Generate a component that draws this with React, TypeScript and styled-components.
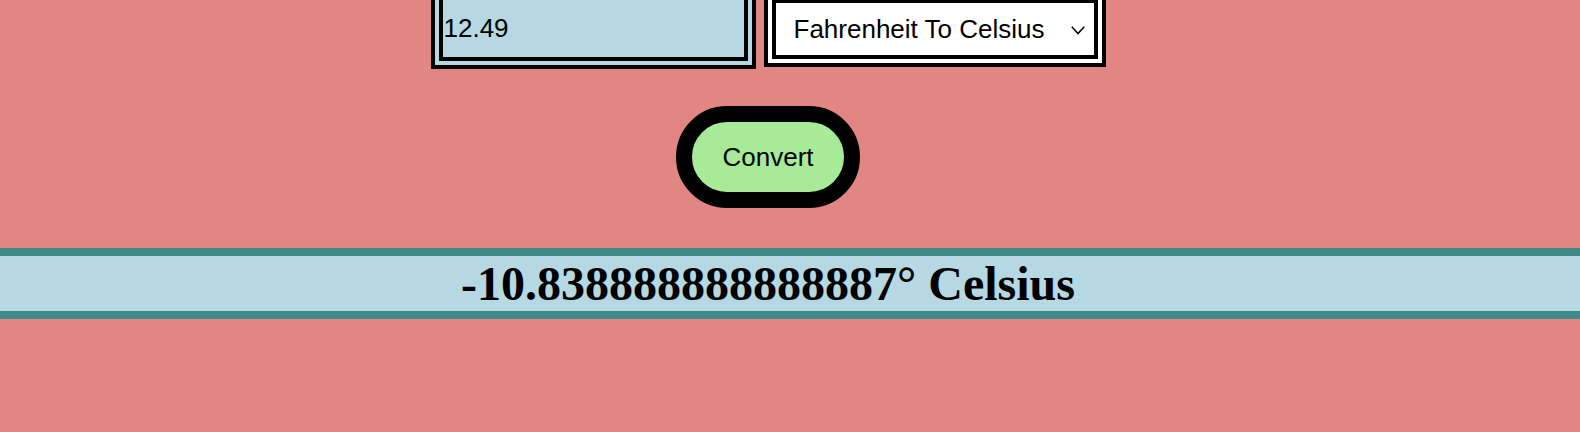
import React from 'react';
import styled, { createGlobalStyle } from 'styled-components';

const GlobalStyle = createGlobalStyle`
  html, body {
    margin: 0;
    padding: 0;
    background: #e18683;
    overflow: hidden;
  }
  body {
    font-family: "Liberation Serif", "Times New Roman", serif;
  }
`;

const Page = styled.div`
  display: flex;
  flex-direction: column;
  align-items: stretch;
  min-height: 432px;
`;

const Centered = styled.div`
  display: flex;
  flex-direction: column;
  align-items: center;
  padding-right: 44px;
`;

const FormRow = styled.div`
  display: flex;
  align-items: center;
  gap: 8px;
  margin-top: -12px;
`;

const TempInput = styled.input`
  box-sizing: content-box;
  width: 300px;
  height: 57px;
  padding: 0 0 0 1px;
  border: 12px double #000;
  background: #b6d8e2;
  color: #000;
  font-family: "Liberation Sans", Arial, sans-serif;
  font-size: 26px;
  outline: none;
`;

const SelectWrap = styled.div`
  position: relative;
  display: flex;
`;

const UnitSelect = styled.select`
  appearance: none;
  -webkit-appearance: none;
  box-sizing: content-box;
  width: 300px;
  height: 52px;
  padding: 0 0 0 18px;
  margin: 0;
  border: 12px double #000;
  border-radius: 0;
  background: #fff;
  color: #000;
  font-family: "Liberation Sans", Arial, sans-serif;
  font-size: 26px;
  outline: none;
`;

const Chevron = styled.svg`
  position: absolute;
  right: 21px;
  top: 35px;
  width: 14px;
  height: 9px;
  pointer-events: none;
`;

const ConvertButton = styled.button`
  margin-top: 37px;
  padding: 20px 30px;
  border: 16px solid #000;
  border-radius: 60px;
  background: #a7eb98;
  color: #000;
  font-family: "Liberation Sans", Arial, sans-serif;
  font-size: 26px;
  line-height: 30px;
  cursor: pointer;
`;

const Result = styled.h1`
  margin: 40px 0 0;
  padding: 0 44px 0 0;
  border-top: 8px solid #3c8a89;
  border-bottom: 8px solid #3c8a89;
  background: #b6d8e2;
  color: #000;
  font-family: "Liberation Serif", "Times New Roman", serif;
  font-size: 48px;
  font-weight: bold;
  line-height: 55px;
  text-align: center;
`;

export default function App() {
  const [value, setValue] = React.useState('12.49');
  const [mode, setMode] = React.useState('f2c');

  return (
    <Page>
      <GlobalStyle />
      <Centered>
        <FormRow>
          <TempInput value={value} onChange={(e) => setValue(e.target.value)} />
          <SelectWrap>
            <UnitSelect value={mode} onChange={(e) => setMode(e.target.value)}>
              <option value="f2c">Fahrenheit To Celsius</option>
              <option value="c2f">Celsius To Fahrenheit</option>
            </UnitSelect>
            <Chevron viewBox="0 0 14 9">
              <path d="M0.8 0.8 L7 7.6 L13.2 0.8" fill="none" stroke="#000" strokeWidth="1.5" />
            </Chevron>
          </SelectWrap>
        </FormRow>
        <ConvertButton>Convert</ConvertButton>
      </Centered>
      <Result>-10.838888888888887° Celsius</Result>
    </Page>
  );
}
